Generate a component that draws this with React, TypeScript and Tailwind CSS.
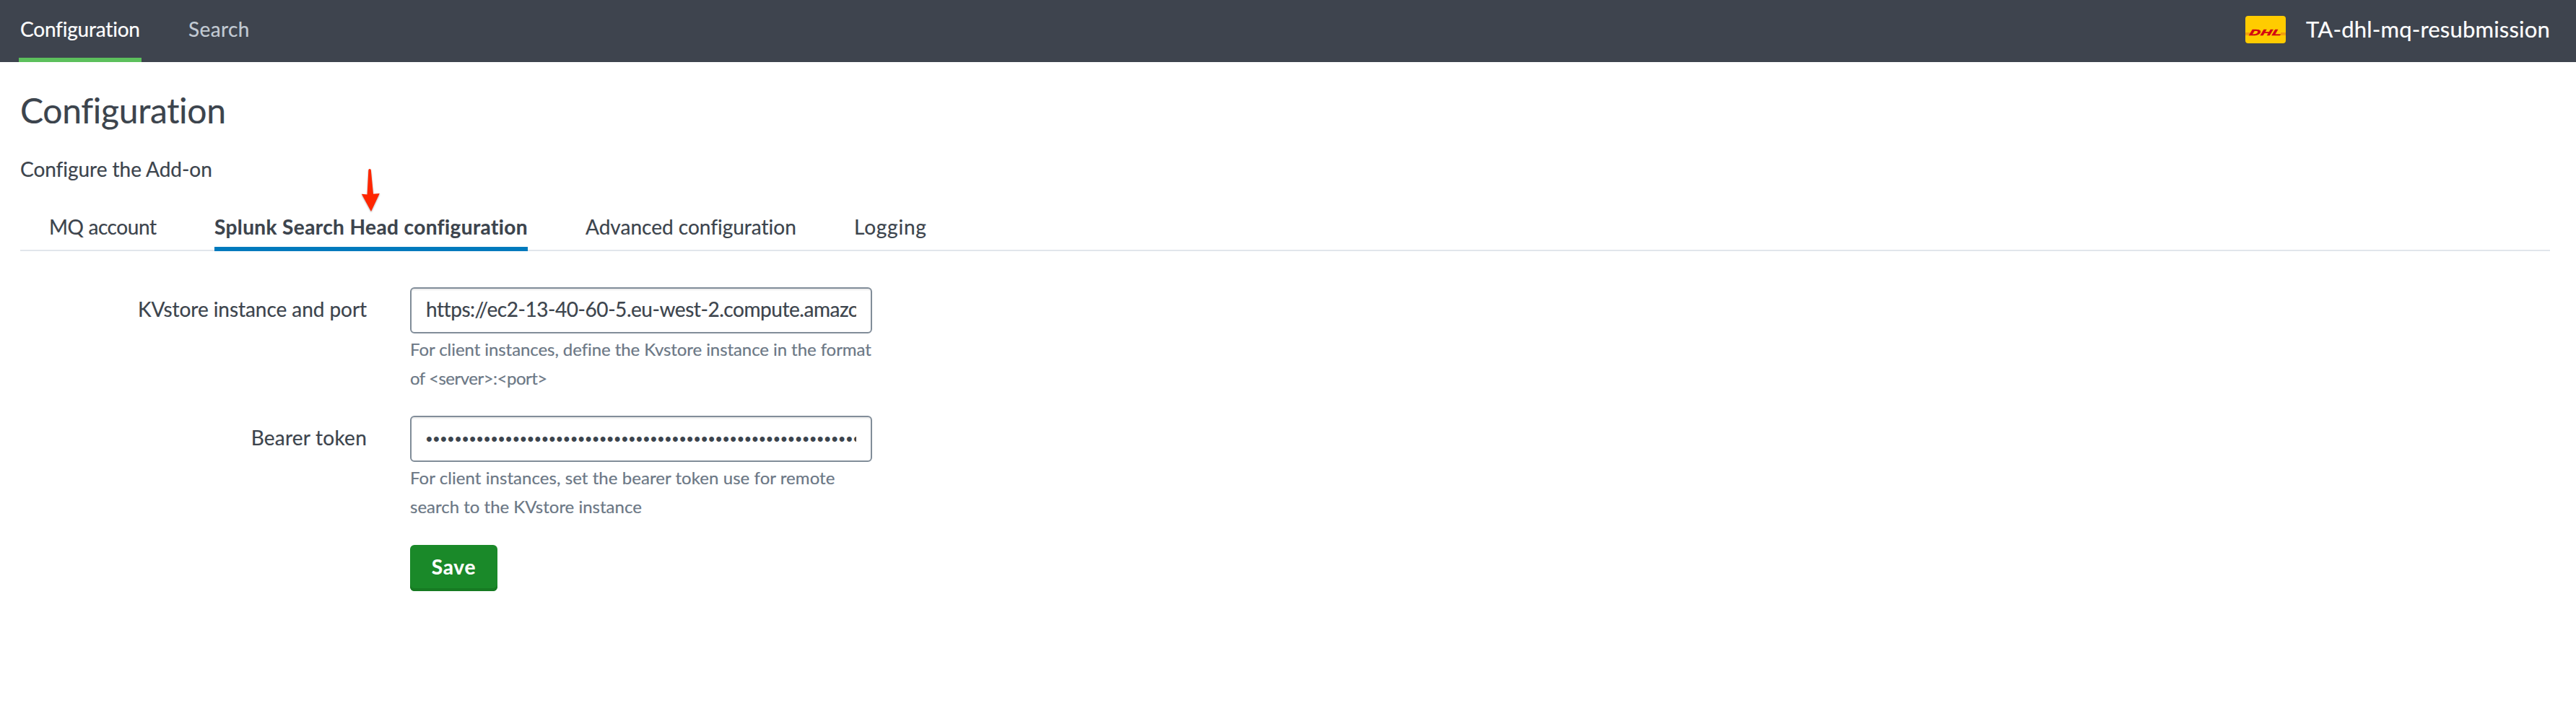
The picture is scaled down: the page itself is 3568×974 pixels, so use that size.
import React from "react";

function DhlLogo() {
  return (
    <svg width="56" height="38" viewBox="0 0 56 38" className="shrink-0" aria-label="DHL">
      <rect width="56" height="38" rx="4" fill="#ffcc00" />
      <path d="M0 24h6.5M49 24h7" stroke="#e0701a" strokeWidth="1" />
      <path d="M0 26h5.5M48 26h8" stroke="#f3a30c" strokeWidth="2" />
      <text
        transform="translate(5 26.5) skewX(-14) scale(1.8 1)"
        fontFamily="Liberation Sans, sans-serif"
        fontSize="11.5"
        fontWeight="700"
        fontStyle="italic"
        fill="#d40511"
        stroke="#d40511"
        strokeWidth="0.6"
        textLength="24.5"
      >
        DHL
      </text>
    </svg>
  );
}

function Arrow() {
  return (
    <svg
      width="34"
      height="66"
      viewBox="0 0 34 66"
      className="absolute top-[231px] left-[497px] drop-shadow-[0_1px_1px_rgba(0,0,0,0.35)]"
    >
      <path
        d="M13.4 4.5Q13.6 3 15 3Q16.6 3 16.8 4.5L20 37.8L28.8 37L17 62L3.8 37.8L11.6 38.6Z"
        fill="#ff2600"
      />
    </svg>
  );
}

const tabs = [
  { label: "MQ account", active: false, style: "w-[150px] tracking-[-0.4px] pl-px" },
  { label: "Splunk Search Head configuration", active: true, style: "w-[434px] tracking-[0.4px]" },
  { label: "Advanced configuration", active: false, style: "w-[292px] tracking-[0px]" },
  { label: "Logging", active: false, style: "tracking-[0.8px]" },
];

const labelStyle = "w-[480px] text-right text-[28px] leading-[60px] text-[#3c444d]";
const inputStyle =
  "block h-[64px] w-[640px] rounded-[6px] border-2 border-[#818d99] bg-white px-[20px] text-[#3c444d] shadow-[inset_0_2px_2px_rgba(0,0,0,0.08)] outline-none";
const helpStyle =
  "mt-[2px] text-[24px] leading-[40px] whitespace-nowrap text-[#6b7785] [-webkit-text-stroke:0.2px]";

export default function App() {
  return (
    <div className="relative min-h-[974px] bg-white font-[Lato,sans-serif] text-[28px] text-[#3c444d] [-webkit-text-stroke:0.2px] [font-variant-ligatures:none]">
      <header className="flex h-[86px] items-start justify-between bg-[#3e444e] pr-[36px] pl-[26px] text-white">
        <nav className="flex gap-[63px] leading-[80px]">
          <a className="h-[86px] w-[170px] border-b-[6px] border-[#5cc05c] pl-[2px] tracking-[-0.2px]">
            Configuration
          </a>
          <a className="pl-[2px] tracking-[0.4px] text-[#c3cbd4]">Search</a>
        </nav>
        <div className="flex items-start gap-[28px]">
          <div className="pt-[22px]">
            <DhlLogo />
          </div>
          <span className="text-[31px] leading-[80px] tracking-[0.2px]">TA-dhl-mq-resubmission</span>
        </div>
      </header>

      <main className="pt-[37px] pr-[36px] pl-[28px]">
        <h1 className="text-[48px] leading-[60px] tracking-[-0.3px]">Configuration</h1>
        <p className="mt-[31px] leading-[40px] tracking-[-0.04px]">Configure the Add-on</p>

        <div className="mt-[39px] flex h-[55px] gap-[80px] border-b-2 border-[#e1e6eb] pl-[39px]">
          {tabs.map((t) => (
            <a
              key={t.label}
              className={`-mb-[2px] h-[55px] border-b-[6px] leading-[42px] whitespace-nowrap ${t.style} ${
                t.active ? "border-[#007abd] font-bold" : "border-transparent"
              }`}
            >
              {t.label}
            </a>
          ))}
        </div>

        <form className="mt-[50px] flex flex-col">
          <div className="flex gap-[60px]">
            <label className={`${labelStyle} tracking-[-0.06px]`}>KVstore instance and port</label>
            <div>
              <input
                className={`${inputStyle} pb-[4px] text-[28px] tracking-[-0.45px]`}
                defaultValue="https://ec2-13-40-60-5.eu-west-2.compute.amazonaws.com:8089"
              />
              <p className={`${helpStyle} tracking-[-0.07px]`}>
                For client instances, define the Kvstore instance in the format
                <br />
                <span className="tracking-[-0.5px]">of &lt;server&gt;:&lt;port&gt;</span>
              </p>
            </div>
          </div>

          <div className="mt-[32px] flex gap-[60px]">
            <label className={`${labelStyle} tracking-[0.24px]`}>Bearer token</label>
            <div>
              <input
                type="password"
                className={`${inputStyle} pt-[1px] font-['Liberation_Sans',sans-serif] text-[25px] tracking-[1.28px] [-webkit-text-stroke:0px]`}
                defaultValue={"x".repeat(80)}
              />
              <p className={`${helpStyle} tracking-[0.06px]`}>
                For client instances, set the bearer token use for remote
                <br />
                <span className="tracking-[0px]">search to the KVstore instance</span>
              </p>
            </div>
          </div>

          <button
            type="button"
            className="mt-[33px] ml-[540px] h-[64px] w-[121px] rounded-[6px] bg-[#1a8929] pb-[5px] text-center font-bold tracking-[0.8px] text-white shadow-[inset_0_-4px_0_#167a22]"
          >
            Save
          </button>
        </form>
      </main>
      <Arrow />
    </div>
  );
}
